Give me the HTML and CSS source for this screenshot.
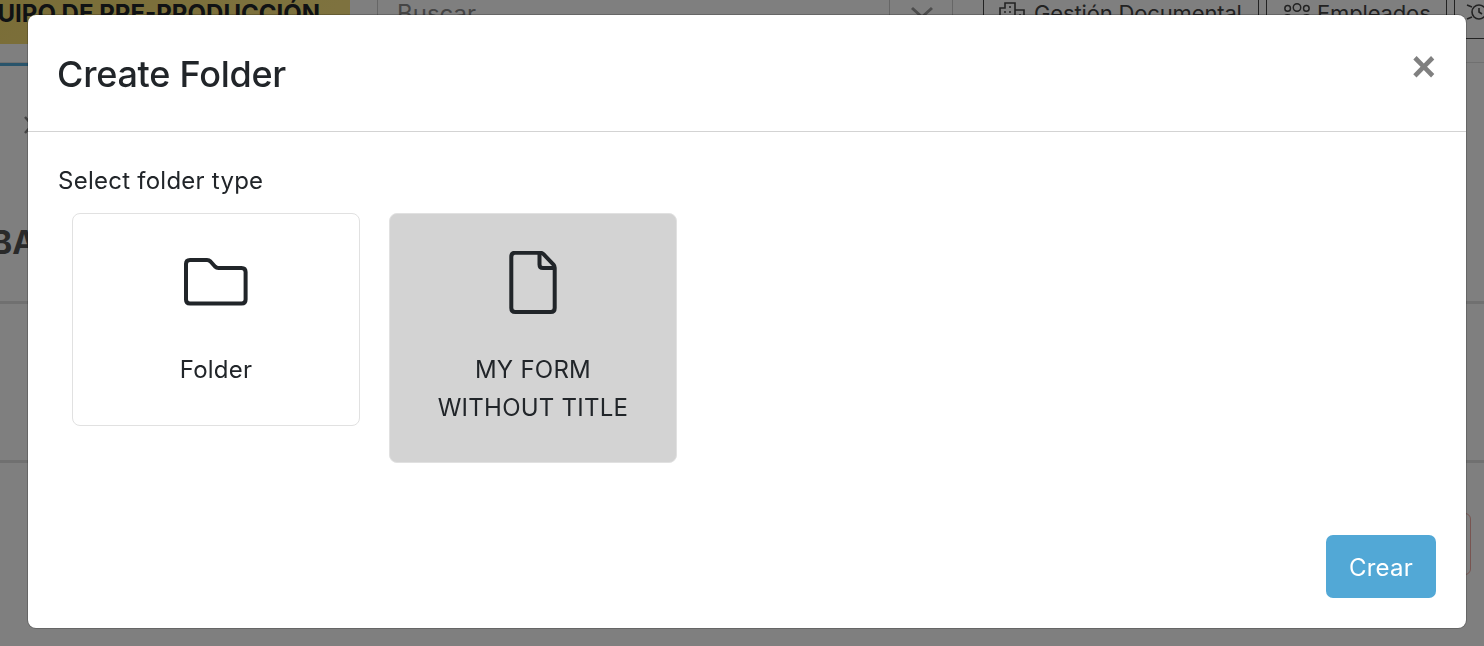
FILE: index.html
```html
<!DOCTYPE html>
<html lang="en">
<head>
<meta charset="UTF-8">
<meta name="viewport" content="width=device-width, initial-scale=1.0">
<title>Create Folder</title>
<link rel="stylesheet" href="styles.css">
</head>
<body>
<div class="page">
  <div class="topbar">
    <div class="team"><span>EQUIPO DE PRE-PRODUCCIÓN</span></div>
    <div class="search">Buscar</div>
    <div class="search-clear">
      <svg width="24" height="24" viewBox="0 0 24 24"><path d="M2 4l20 18M22 4L2 22" fill="none" stroke="#9a9a9a" stroke-width="3"/></svg>
    </div>
    <div class="nav-btn nav-docs">
      <svg width="30" height="28" viewBox="0 0 30 28" fill="none" stroke="#444" stroke-width="1.6"><path d="M2 26V8h5V3h10v23M17 10h9v16M1 26h28M6 12h2M11 7h2M11 12h2M6 17h2M11 17h2M21 15h2M21 20h2"/></svg>
      Gestión Documental
    </div>
    <div class="nav-btn nav-people">
      <svg width="28" height="28" viewBox="0 0 30 28" fill="none" stroke="#444" stroke-width="1.6"><circle cx="5" cy="8" r="3"/><circle cx="15" cy="7" r="4"/><circle cx="25" cy="8" r="3"/><path d="M1 17c1-3 6-3 8 0M9 20c2-4 10-4 12 0M21 17c2-3 7-3 8 0"/></svg>
      Empleados
    </div>
    <div class="nav-btn nav-last">
      <svg width="24" height="28" viewBox="0 0 24 28" fill="none" stroke="#444" stroke-width="1.6"><circle cx="14" cy="12" r="7"/><path d="M14 8v4l3 2M7 7L2 5M7 17l-5 2"/></svg>
    </div>
  </div>
  <div class="tab-line"></div>
  <div class="crumb">
    <svg width="20" height="20" viewBox="0 0 20 20" fill="none" stroke="#888" stroke-width="2.500"><path d="M3 2l14 16M17 2L3 18"/></svg>
  </div>
  <div class="heading"><span>BA</span></div>
  <div class="row-one"></div>
  <div class="row-two"><span class="red-btn"></span></div>
</div>

<div class="backdrop"></div>

<div class="modal">
  <div class="modal-header">
    <h2>Create Folder</h2>
    <button class="close">&times;</button>
  </div>
  <div class="modal-body">
    <p class="label">Select folder type</p>
    <div class="types">
      <div class="type-card">
        <svg width="66" height="66" viewBox="0 -7 66 66" fill="none" stroke="#212529" stroke-width="4" stroke-linejoin="round">
          <path d="M7 2h17c1.500 0 2.500.5 3.500 1.500l4.500 5c1 1 2 1.500 3.500 1.500h23c2.800 0 4.100 1.500 4.100 4v27.500c0 2.500-1.500 4-4 4H7c-2.500 0-4-1.500-4-4V6c0-2.500 1.500-4 4-4z"/>
        </svg>
        <span>Folder</span>
      </div>
      <div class="type-card active">
        <svg width="52" height="66" viewBox="0 0 52 66" fill="none" stroke="#212529" stroke-width="4" stroke-linejoin="round">
          <path d="M8.300 1.700H33c1.500 0 2.500.5 3.500 1.500l10 10.500c.8.9 1.200 1.800 1.200 3V57c0 2.500-1.500 4-4 4H8.300c-2.500 0-4-1.500-4-4V5.700c0-2.500 1.500-4 4-4z"/>
          <path d="M32.500 2v11.500c0 2.500 1.500 3.500 3.500 3.500h11.500"/>
        </svg>
        <span>MY FORM WITHOUT TITLE</span>
      </div>
    </div>
  </div>
  <div class="modal-footer">
    <button class="create">Crear</button>
  </div>
</div>
</body>
</html>
```

FILE: styles.css
```css
* {
  box-sizing: border-box;
}

html, body {
  height: 100%;
}

body {
  margin: 0;
  overflow: hidden;
  font-family: Inter, "Liberation Sans", sans-serif;
  color: #212529;
  background-color: #fff;
}

.page {
  height: 646px;
  overflow: hidden;
}

/* page behind the dialog */
.topbar {
  display: flex;
  align-items: flex-start;
  height: 63px;
  border-bottom: 1px solid #e0e0e0;
}

.team {
  flex: none;
  display: flex;
  justify-content: flex-end;
  width: 350px;
  height: 44px;
  padding-right: 30px;
  background: linear-gradient(135deg, #f5dc70, #fde680);
  font-size: 24px;
  font-weight: 700;
  line-height: 28px;
  white-space: nowrap;
  overflow: hidden;
}

.team span {
  flex: none;
}

.search {
  flex: none;
  width: 512px;
  height: 44px;
  margin-left: 27px;
  padding-left: 19px;
  border-left: 1px solid #ccc;
  font-size: 24px;
  line-height: 28px;
  color: #8a8a8a;
}

.search-clear {
  flex: none;
  width: 64px;
  height: 44px;
  padding: 4px 0 0 20px;
  border-left: 1px solid #ccc;
  border-right: 1px solid #ccc;
}

.nav-btn {
  flex: none;
  display: flex;
  align-items: flex-start;
  gap: 6px;
  height: 39px;
  border: 1px solid #444;
  border-top: 0;
  font-size: 22px;
  line-height: 27px;
  letter-spacing: -0.15px;
  white-space: nowrap;
  color: #444;
}

.nav-docs {
  width: 276px;
  margin-left: 30px;
  padding-left: 14px;
}

.nav-people {
  width: 181px;
  margin-left: 7px;
  padding-left: 16px;
}

.nav-last {
  width: 30px;
  margin-left: 7px;
  padding-left: 10px;
  border-right: 0;
  overflow: hidden;
}

.nav-last svg {
  flex: none;
}

.tab-line {
  width: 350px;
  height: 3px;
  background-color: #52a8d6;
}

.crumb {
  height: 20px;
  margin-top: 49px;
  padding-left: 22px;
}

.heading {
  height: 79px;
  margin-top: 90px;
  padding-top: 0;
  border-bottom: 3px solid #e0e0e0;
  font-size: 32px;
  font-weight: 700;
  line-height: 36px;
  color: #555;
  overflow: hidden;
}

.heading span {
  display: block;
  margin-left: -9px;
}

.row-one {
  height: 159px;
  border-bottom: 3px solid #e0e0e0;
}

.row-two {
  display: flex;
  justify-content: flex-end;
  padding: 50px 13px 0 0;
}

.red-btn {
  width: 60px;
  height: 62px;
  border: 1px solid #f0a8a0;
  border-radius: 6px;
}

.backdrop {
  position: fixed;
  inset: 0;
  background-color: rgba(0, 0, 0, 0.5);
}

/* dialog */
.modal {
  position: fixed;
  top: 15px;
  left: 28px;
  width: 1438px;
  height: 613px;
  display: flex;
  flex-direction: column;
  background-color: #fff;
  border-radius: 8px;
  box-shadow: 0 0 0 1px rgba(0, 0, 0, 0.2);
}

.modal-header {
  display: flex;
  justify-content: space-between;
  height: 117px;
  padding: 30px 30px 0;
  border-bottom: 1px solid #d3d3d3;
}

.modal-header h2 {
  margin: 0 0 0 -1px;
  font-size: 36px;
  font-weight: 500;
  line-height: 58px;
  letter-spacing: -0.25px;
}

.close {
  height: 44px;
  padding: 0;
  border: 0;
  background: none;
  color: #808080;
  font-family: "Liberation Sans", sans-serif;
  font-size: 42px;
  font-weight: 700;
  line-height: 44px;
}

.modal-body {
  flex: 1;
  padding: 31px 30px 0;
}

.label {
  margin: 0 0 14px;
  font-size: 24px;
  line-height: 36px;
  letter-spacing: 0.25px;
}

.types {
  display: flex;
  align-items: flex-start;
  gap: 29px;
  padding-left: 14px;
}

.type-card {
  display: flex;
  flex-direction: column;
  align-items: center;
  width: 288px;
  min-height: 213px;
  padding: 37px 40px 35px;
  border: 1px solid #e1e1e1;
  border-radius: 8px;
  font-size: 24px;
  line-height: 38px;
  letter-spacing: 0.25px;
  text-align: center;
}

.type-card svg {
  margin-bottom: 34px;
}

.type-card.active {
  background-color: #d3d3d3;
}

.modal-footer {
  display: flex;
  justify-content: flex-end;
  padding: 0 30px 30px;
}

.create {
  width: 110px;
  height: 63px;
  padding: 2px 0 0;
  border: 0;
  border-radius: 7px;
  background-color: #52a8d6;
  color: #fff;
  font-family: inherit;
  font-size: 24px;
  letter-spacing: 0.2px;
}
```
